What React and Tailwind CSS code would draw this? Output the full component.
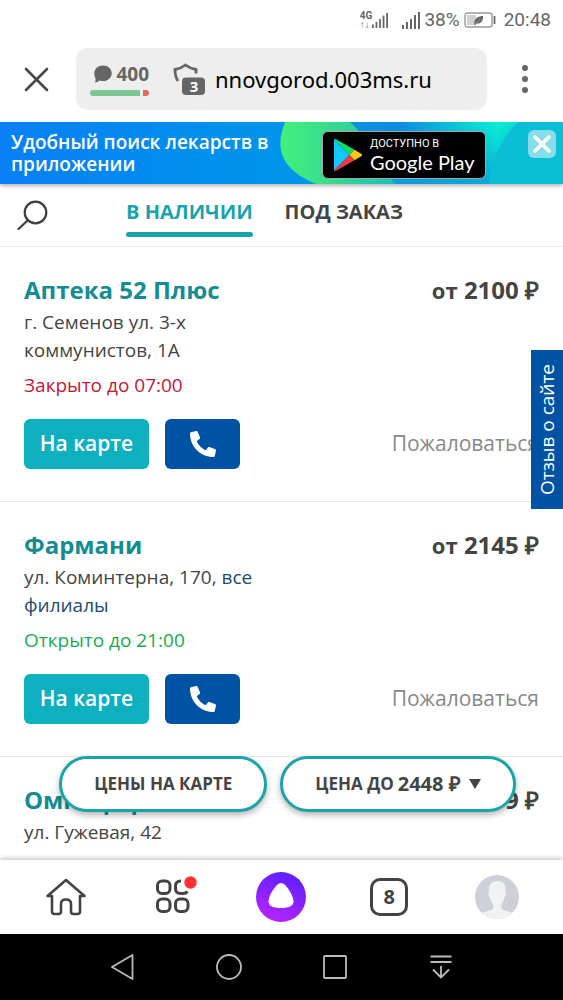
import React, { useState } from 'react';
import { FaPhoneAlt } from 'react-icons/fa';

const pharmacies = [
  { id: 1, name: 'Аптека 52 Плюс', address: 'г. Семенов ул. 3-х коммунистов, 1А', status: 'Закрыто до 07:00', open: false, price: 2100 },
  { id: 2, name: 'Фармани', address: 'ул. Коминтерна, 170,', branches: true, status: 'Открыто до 21:00', open: true, price: 2145 },
  { id: 3, name: 'Омнифарм', address: 'ул. Гужевая, 42', status: 'Открыто до 21:00', open: true, price: 2199 },
];

// ── Icons ──

const SignalIcon = ({ className }) => (
  <svg viewBox="0 0 18 18" className={className} fill="#666" aria-hidden="true">
    <rect x="0" y="14" width="2" height="4" />
    <rect x="4" y="11" width="2" height="7" />
    <rect x="8" y="8" width="2" height="10" />
    <rect x="12" y="4" width="2" height="14" />
    <rect x="16" y="1" width="2" height="17" />
  </svg>
);

const BatteryIcon = () => (
  <svg viewBox="0 0 32 16" className="w-8 h-4" fill="none" aria-hidden="true">
    <rect x="1" y="1" width="27" height="14" rx="2.5" stroke="#999" strokeWidth="1.4" />
    <rect x="3" y="3" width="9" height="10" fill="#d0d0d0" />
    <rect x="29.6" y="4" width="1.8" height="8" fill="#666" />
    <path d="M10.500 12.800c-1-5 2-8.300 8.500-9 .4 5-2 8.200-6.500 8l-1.400 1.400z" fill="#666" />
    <path d="M11.500 12l5-5" stroke="#bbb" strokeWidth=".6" />
  </svg>
);

const ShieldIcon = () => (
  <svg viewBox="0 0 32 32" className="w-8 h-8" fill="none" aria-hidden="true">
    <path d="M5 18C2.500 14.500 2 11 2 6.500 6.500 5.800 9.500 4.300 12.500 2c3 2.300 6 3.800 10.500 4.500v4" stroke="#666" strokeWidth="2.8" />
    <rect x="9" y="14.500" width="23" height="17.500" rx="4" fill="#666" />
  </svg>
);

const SearchIcon = () => (
  <svg viewBox="0 0 32 32" className="w-8 h-8" fill="none" stroke="#3f3f3f" strokeWidth="2.200" strokeLinecap="round" aria-hidden="true">
    <circle cx="19.500" cy="12.500" r="10.800" />
    <path d="M11.800 20.200 2.500 29" />
  </svg>
);

const PlayLogo = () => (
  <svg viewBox="0 0 28 32" className="w-7 h-8 shrink-0" aria-hidden="true">
    <path d="M0 .6v30.800L15.500 16z" fill="#14c8ff" />
    <path d="M0 .6 15.500 16l5-5.200L2 .3C1 0 .3 0 0 .6z" fill="#0ce06c" />
    <path d="M20.500 10.800 15.500 16l5 5.200L27.500 17c.7-.5.700-1.500 0-2z" fill="#ffc815" />
    <path d="M0 31.400 15.500 16l5 5.200L2 31.700c-1 .5-1.700.3-2-.3z" fill="#f2394a" />
  </svg>
);

const BannerArt = () => (
  <svg viewBox="0 0 283 62" preserveAspectRatio="xMaxYMid slice" className="absolute right-0 top-0 h-full" aria-hidden="true">
    <defs>
      <linearGradient id="wave" x1="0" x2="1">
        <stop offset="0" stopColor="#0b90e0" />
        <stop offset=".35" stopColor="#0a8de0" />
        <stop offset=".55" stopColor="#0bb4d8" />
        <stop offset=".88" stopColor="#0bf0d4" />
        <stop offset="1" stopColor="#0cdcd4" />
      </linearGradient>
      <linearGradient id="blob" x1="0" x2="1">
        <stop offset="0" stopColor="#42f07c" />
        <stop offset=".5" stopColor="#35d890" />
        <stop offset="1" stopColor="#12c0c0" />
      </linearGradient>
      <linearGradient id="fade" x1="0" y1="0" x2="0" y2="1">
        <stop offset="0" stopColor="#0c9fd8" stopOpacity="0" />
        <stop offset="1" stopColor="#0c9fd8" stopOpacity=".9" />
      </linearGradient>
    </defs>
    <path d="M60 0h179c-16 14-25 32-29 62H60z" fill="url(#wave)" />
    <path d="M60 0h179c-16 14-25 32-29 62H60z" fill="url(#fade)" />
    <path d="M239 0h44v62h-74c4-30 14-48 30-62z" fill="#0cbdd6" />
    <path d="M5 0C-6 28 2 48 36 62h80C100 46 92 20 70 0z" fill="url(#blob)" />
  </svg>
);

const HomeIcon = () => (
  <svg viewBox="0 0 40 38" className="w-10 h-10" fill="none" stroke="#414347" strokeWidth="2.600" strokeLinejoin="round" strokeLinecap="round" aria-hidden="true">
    <path d="M20 2 1.500 18H6v15.500q0 2.500 2.500 2.500h4q2.500 0 2.500-2.500V26q0-4.500 5-4.500t5 4.500v7.500q0 2.500 2.500 2.500h4q2.500 0 2.500-2.500V18h4.500z" />
  </svg>
);

const ServicesIcon = () => (
  <svg viewBox="-1 2 40 40" className="w-10 h-10 overflow-visible" fill="none" stroke="#414347" strokeWidth="3" aria-hidden="true">
    <rect x="2.500" y="6" width="12.500" height="12.500" rx="4.500" />
    <rect x="2.500" y="24" width="12.500" height="12.500" rx="4.500" />
    <rect x="20.500" y="24" width="12.500" height="12.500" rx="4.500" />
    <path d="M26 6q-5.500 0-5.500 5v2.500q0 5 5 5h2.500q3 0 4.500-2" />
    <circle cx="35.500" cy="7.500" r="6.200" fill="#ff3333" stroke="none" />
  </svg>
);

const AliceIcon = () => (
  <svg viewBox="0 0 50 50" className="w-[50px] h-[50px]" aria-hidden="true">
    <defs>
      <linearGradient id="alice" x1=".7" y1="0" x2=".3" y2="1">
        <stop offset="0" stopColor="#5a20ff" />
        <stop offset="1" stopColor="#b824ff" />
      </linearGradient>
    </defs>
    <circle cx="25" cy="25" r="25" fill="url(#alice)" />
    <path d="M25 11c5 0 12.500 13 12.500 18.500 0 4.500-5 6.500-12.500 6.500s-12.500-2-12.500-6.500C12.500 24 20 11 25 11z" fill="#fff" />
  </svg>
);

const AvatarIcon = () => (
  <svg viewBox="0 0 44 44" className="w-11 h-11" aria-hidden="true">
    <clipPath id="avatar">
      <circle cx="22" cy="22" r="22" />
    </clipPath>
    <g clipPath="url(#avatar)">
      <rect width="44" height="44" fill="#cdd0d8" />
      <path d="M22 6c6-.5 9 3 8.500 8l-.2 3c1.200.3 1 4-.8 5-.5 3-1.500 5-3 7v5c2 2 11 2.500 14 6v6H4v-6c3-3.500 12-4 14-6v-5c-1.700-2-2.700-4-3.200-7-1.800-1-2-4.700-.8-5-1-6 1.500-10.500 8-11z" fill="#f2f2f3" />
    </g>
  </svg>
);

// ── Browser chrome ──

const StatusBar = () => (
  <div className="flex items-center justify-end h-9 pt-1 pr-3 font-[Roboto,sans-serif] text-[19px] text-[#666]">
    <div className="flex flex-col text-[10px] leading-[9px] font-bold">
      <span>4G</span>
      <span>↑↓</span>
    </div>
    <SignalIcon className="w-4 h-4" />
    <SignalIcon className="w-[18px] h-[18px] ml-3.5 mr-1" />
    <span>38%</span>
    <span className="ml-1 mr-2"><BatteryIcon /></span>
    <span>20:48</span>
  </div>
);

const AddressBar = () => (
  <div className="flex items-center px-6 pt-3 pb-3">
    <button aria-label="Закрыть" className="shrink-0 mr-[27px]">
      <svg viewBox="0 0 25 25" className="w-[25px] h-[25px]" stroke="#484848" strokeWidth="2.600" strokeLinecap="round">
        <path d="M2 2l21 21M23 2 2 23" />
      </svg>
    </button>
    <div className="flex flex-1 min-w-0 items-center h-[62px] px-3.5 rounded-xl bg-[#eee]">
      <div className="shrink-0 w-[59px]">
        <div className="flex items-center justify-between pl-1 text-[19px] leading-6 font-bold text-[#666]">
          <svg viewBox="0 0 18 18" className="w-[18px] h-[18px]" fill="#666" aria-hidden="true">
            <path d="M9 .5c5 0 8.700 3.300 8.700 7.700S14 16 9 16c-1.300 0-2.500-.2-3.600-.600C4.300 16.700 2.500 17.500.8 17.400c.8-1.200 1-2.500.7-4C.8 12 .3 10.200.3 8.200.3 3.800 4 .5 9 .5z" />
          </svg>
          400
        </div>
        <div className="flex gap-[3px] h-1.5 mt-1">
          <span className="flex-1 rounded-l-full bg-[#7bc795]" />
          <span className="w-1.5 rounded-r-full bg-[#e8655a]" />
        </div>
      </div>
      <div className="relative shrink-0 ml-6">
        <ShieldIcon />
        <span className="absolute right-0 bottom-0 w-[22px] text-center text-[15px] leading-[17px] font-bold text-white">3</span>
      </div>
      <input
        aria-label="Адрес сайта"
        defaultValue="nnovgorod.003ms.ru"
        className="flex-1 min-w-0 ml-2.5 bg-transparent font-['Noto_Sans',sans-serif] text-[22px] text-black outline-none"
      />
    </div>
    <button aria-label="Меню" className="flex flex-col shrink-0 items-center gap-[5px] w-7 ml-6">
      <span className="w-1.5 h-1.5 rounded-full bg-[#666]" />
      <span className="w-1.5 h-1.5 rounded-full bg-[#666]" />
      <span className="w-1.5 h-1.5 rounded-full bg-[#666]" />
    </button>
  </div>
);

const BrowserNav = () => (
  <nav className="relative z-20 flex items-center justify-around h-[74px] px-3 bg-white shadow-[0_-2px_4px_rgba(0,0,0,0.2)]">
    <button aria-label="Домой" className="flex justify-center w-14"><HomeIcon /></button>
    <button aria-label="Сервисы" className="flex justify-center w-14"><ServicesIcon /></button>
    <button aria-label="Алиса" className="flex justify-center w-14"><AliceIcon /></button>
    <button aria-label="Вкладки" className="flex justify-center w-14">
      <span className="flex items-center justify-center w-[38px] h-[38px] rounded-[10px] border-3 border-[#414347] text-[20px] font-bold text-[#414347]">8</span>
    </button>
    <button aria-label="Профиль" className="flex justify-center w-14"><AvatarIcon /></button>
  </nav>
);

const SystemNav = () => (
  <div className="relative z-20 flex items-center justify-center gap-[78px] h-[66px] bg-black">
    <button aria-label="Назад">
      <svg viewBox="0 0 28 28" className="w-7 h-7" fill="none" stroke="#bbb" strokeWidth="1.800" strokeLinejoin="round">
        <path d="M23.500 2v24L3 14z" />
      </svg>
    </button>
    <button aria-label="Главный экран">
      <svg viewBox="0 0 28 28" className="w-7 h-7" fill="none" stroke="#bbb" strokeWidth="1.800">
        <circle cx="14" cy="14" r="12" />
      </svg>
    </button>
    <button aria-label="Недавние">
      <svg viewBox="0 0 28 28" className="w-7 h-7" fill="none" stroke="#bbb" strokeWidth="1.800">
        <rect x="3" y="3" width="22" height="22" rx="1" />
      </svg>
    </button>
    <button aria-label="Уведомления">
      <svg viewBox="0 0 28 28" className="w-7 h-7" fill="none" stroke="#bbb" strokeWidth="1.800">
        <path d="M3.500 3.500h21M3.500 9h21M14 13v11M6 16.500l8 8 8-8" />
      </svg>
    </button>
  </div>
);

// ── Page ──

const AppBanner = ({ onClose }) => (
  <div className="relative z-10 flex items-start h-[62px] pl-[11px] pr-[7px] bg-linear-to-r from-[#0a7ff5] to-[#0aa8e0] shadow-[0_2px_4px_rgba(0,0,0,0.3)]">
    <BannerArt />
    <p className="relative flex-1 pt-[9px] text-[19px] leading-[22px] font-semibold text-white">
      Удобный поиск лекарств в приложении
    </p>
    <a href="#google-play" className="relative flex items-center gap-2 w-[164px] h-12 mt-[9px] ml-10 pl-[11px] rounded-md border border-[#a6a6a6] bg-black text-white">
      <PlayLogo />
      <span className="flex flex-col whitespace-nowrap">
        <span className="font-[Roboto,sans-serif] text-[11px] leading-[14px]">ДОСТУПНО В</span>
        <span className="font-[Lato,sans-serif] text-[20px] leading-[22px]">Google Play</span>
      </span>
    </a>
    <button onClick={onClose} aria-label="Закрыть баннер" className="relative flex items-center justify-center w-7 h-7 mt-2 ml-[42px] rounded-md bg-white/50">
      <svg viewBox="0 0 18 18" className="w-[18px] h-[18px]" stroke="#fff" strokeWidth="3.600" strokeLinecap="round">
        <path d="M2 2l14 14M16 2 2 16" />
      </svg>
    </button>
  </div>
);

const Tab = ({ active, onClick, children }) => (
  <button
    onClick={onClick}
    className={`flex flex-col gap-2 text-[20px] leading-6 font-bold ${active ? 'text-[#1ba3ac]' : 'text-[#444]'}`}
  >
    {children}
    {active && <span className="w-full h-[5px] rounded-sm bg-[#1ba3ac]" />}
  </button>
);

const Tabs = ({ tab, setTab }) => (
  <div className="flex items-start h-[63px] pt-4 pl-4 border-b border-[#eee]">
    <button aria-label="Поиск" className="mr-[78px]"><SearchIcon /></button>
    <div className="flex items-start gap-8">
      <Tab active={tab === 'stock'} onClick={() => setTab('stock')}>В НАЛИЧИИ</Tab>
      <Tab active={tab === 'order'} onClick={() => setTab('order')}>ПОД ЗАКАЗ</Tab>
    </div>
  </div>
);

const PharmacyCard = ({ item }) => (
  <article className="px-6 pt-[27px] pb-8 border-b border-[#e6e6e6]">
    <div className="flex items-start justify-between">
      <div className="w-[240px]">
        <h2 className="text-[24px] leading-8 font-bold text-[#148c92]">{item.name}</h2>
        <p className="mt-0.5 text-[19px] leading-7 text-[#444]">
          {item.address}
          {item.branches && <> <a href="#branches" className="text-[#234a70]">все филиалы</a></>}
        </p>
        <p className={`mt-[7px] text-[19px] leading-7 ${item.open ? 'text-[#1aab50]' : 'text-[#c4163a]'}`}>
          {item.status}
        </p>
      </div>
      <p className="text-[24px] leading-8 font-bold text-[#444]">
        <span className="text-[22px]">от</span> {item.price} ₽
      </p>
    </div>
    <div className="flex items-center mt-5">
      <button className="w-[125px] h-[50px] mr-4 rounded-md bg-[#0eb0c0] text-[21px] font-semibold text-white">На карте</button>
      <button aria-label="Позвонить" className="flex items-center justify-center w-[75px] h-[50px] rounded-md bg-[#0052a5] text-white">
        <FaPhoneAlt size={26} />
      </button>
      <a href="#complain" className="ml-auto text-[21px] text-[#888]">Пожаловаться</a>
    </div>
  </article>
);

const App = () => {
  const [tab, setTab] = useState('stock');
  const [banner, setBanner] = useState(true);

  return (
    <div className="flex flex-col h-screen overflow-hidden bg-white font-['Open_Sans',sans-serif]">
      <StatusBar />
      <AddressBar />
      {banner && <AppBanner onClose={() => setBanner(false)} />}
      <Tabs tab={tab} setTab={setTab} />

      <main className="relative flex-1 min-h-0 overflow-hidden">
        {pharmacies.map((item) => (
          <PharmacyCard key={item.id} item={item} />
        ))}

        <button className="absolute right-0 top-[103px] flex justify-center w-8 py-3.5 bg-[#0052a5] text-white">
          <span className="[writing-mode:vertical-rl] rotate-180 text-[19px] leading-7 whitespace-nowrap">Отзыв о сайте</span>
        </button>

        <div className="absolute inset-x-0 bottom-12 flex justify-center gap-[13px] pl-3">
          <button className="h-14 px-8 rounded-full border-3 border-[#1ba3ac] bg-white text-[17px] font-bold text-[#444] shadow-[0_3px_6px_rgba(0,0,0,0.3)]">
            ЦЕНЫ НА КАРТЕ
          </button>
          <button className="flex items-center h-14 px-8 rounded-full border-3 border-[#1ba3ac] bg-white text-[17px] font-bold text-[#444] shadow-[0_3px_6px_rgba(0,0,0,0.3)]">
            ЦЕНА ДО <span className="ml-1 text-[20px]">2448 ₽</span>
            <svg viewBox="0 0 12 10" className="w-3 h-2.5 ml-2" fill="#444" aria-hidden="true">
              <path d="M0 0h12L6 10z" />
            </svg>
          </button>
        </div>
      </main>

      <BrowserNav />
      <SystemNav />
    </div>
  );
};

export default App;
